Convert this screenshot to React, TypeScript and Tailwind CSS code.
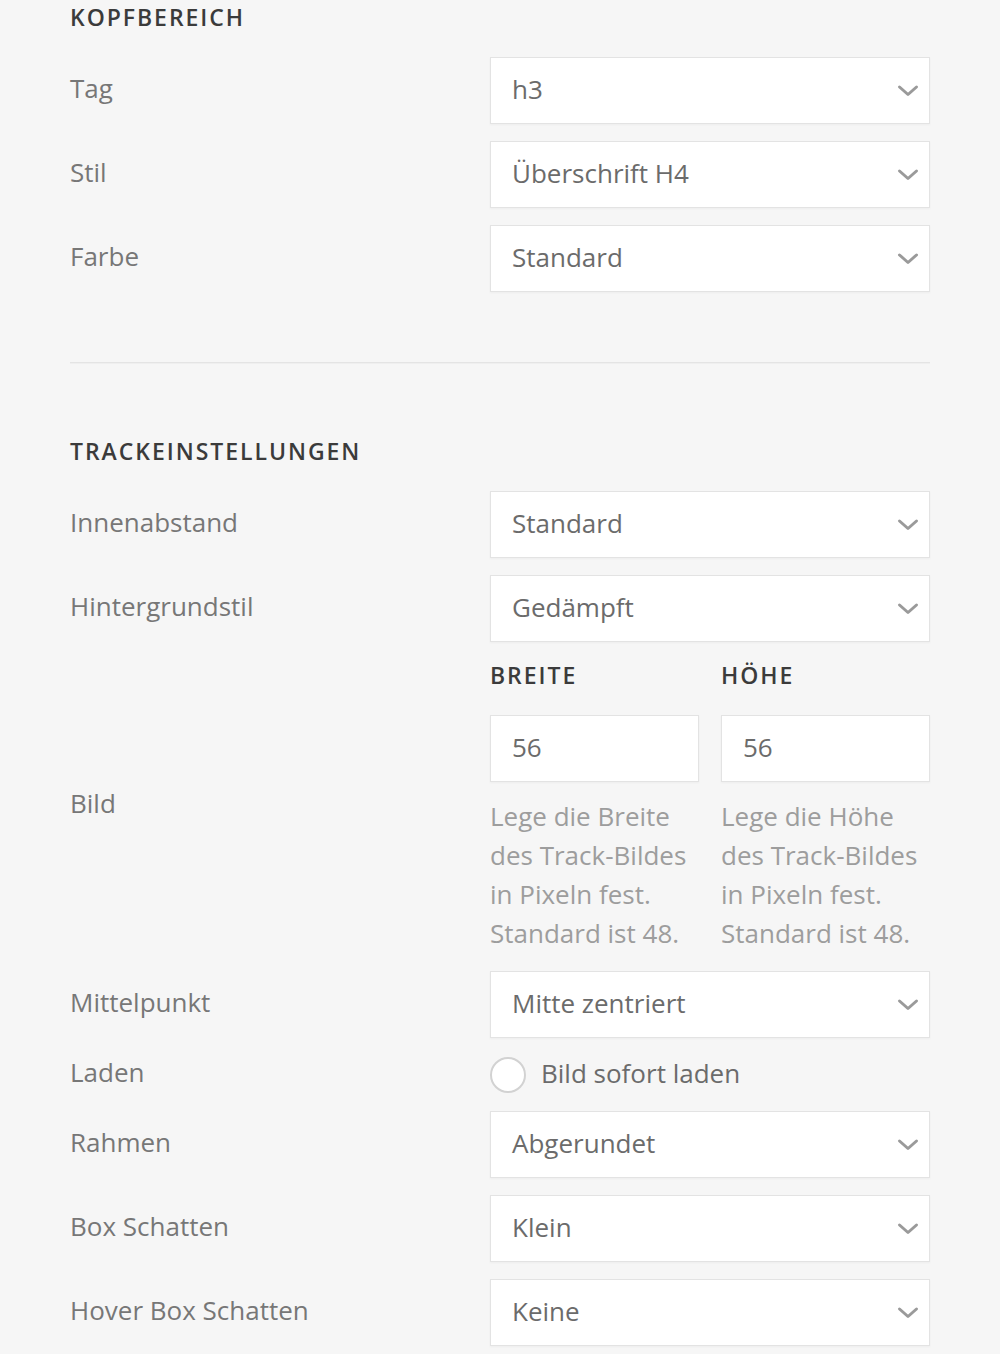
import React from "react";

const SELECTS_TOP = [
  { label: "Tag", value: "h3" },
  { label: "Stil", value: "Überschrift H4" },
  { label: "Farbe", value: "Standard" },
];

const font = { fontFamily: '"Open Sans", "Liberation Sans", sans-serif' };

function Chevron() {
  return (
    <svg width="22" height="14" viewBox="0 0 22 14" className="shrink-0">
      <polyline points="2.5,3 11,10.5 19.5,3" fill="none" stroke="#9a9a9a" strokeWidth="3" strokeLinecap="round" strokeLinejoin="round" />
    </svg>
  );
}

function Select({ value }: { value: string }) {
  return (
    <div className="h-[67px] w-[440px] bg-white border border-[#e3e3e3] shadow-[0_1px_2px_rgba(0,0,0,0.04)] flex items-center justify-between pl-[21px] pr-[10px]">
      <span className="text-[26px] text-[#6b6b6b] leading-none -translate-y-[2px]">{value}</span>
      <Chevron />
    </div>
  );
}

function Row({ label, children }: { label: string; children: React.ReactNode }) {
  return (
    <div className="flex items-center">
      <div className="w-[420px] text-[26px] text-[#777] leading-none -translate-y-[3px]">{label}</div>
      {children}
    </div>
  );
}

function Heading({ children }: { children: React.ReactNode }) {
  return (
    <h2
      className="text-[23px] leading-[36px] font-semibold text-[#3b3b3b] tracking-[0.085em] uppercase -translate-y-[1px]"
      style={font}
    >
      {children}
    </h2>
  );
}

function NumberField({ title, value, help }: { title: string; value: string; help: string }) {
  return (
    <div className="w-[209px] flex flex-col">
      <div className="text-[23px] leading-[34px] font-semibold text-[#3b3b3b] tracking-[0.085em] -translate-y-[1px]">{title}</div>
      <div className="mt-[22px] h-[67px] bg-white border border-[#e3e3e3] shadow-[0_1px_2px_rgba(0,0,0,0.04)] flex items-center pl-[21px]">
        <span className="text-[26px] text-[#6b6b6b] leading-none -translate-y-[2px]">{value}</span>
      </div>
      <p className="mt-[15px] text-[26px] leading-[39px] text-[#9d9d9d]">{help}</p>
    </div>
  );
}

export default function App() {
  return (
    <div className="min-h-[1354px] w-full bg-[#f6f6f6] overflow-hidden" style={font}>
      <div className="w-[860px] ml-[70px]">
        <Heading>Kopfbereich</Heading>
        <div className="mt-[21px] flex flex-col gap-[17px]">
          {SELECTS_TOP.map((s) => (
            <Row key={s.label} label={s.label}>
              <Select value={s.value} />
            </Row>
          ))}
        </div>

        <div className="mt-[70px] h-[2px] bg-[#e4e4e4] border-b border-[#efefef]" />

        <div className="mt-[70px]">
          <Heading>Trackeinstellungen</Heading>
        </div>
        <div className="mt-[21px] flex flex-col gap-[17px]">
          <Row label="Innenabstand">
            <Select value="Standard" />
          </Row>
          <Row label="Hintergrundstil">
            <Select value="Gedämpft" />
          </Row>
          <Row label="Bild">
            <div className="w-[440px] flex justify-between">
              <NumberField
                title="BREITE"
                value="56"
                help="Lege die Breite des Track-Bildes in Pixeln fest. Standard ist 48."
              />
              <NumberField
                title="HÖHE"
                value="56"
                help="Lege die Höhe des Track-Bildes in Pixeln fest. Standard ist 48."
              />
            </div>
          </Row>
          <div className="mt-[1px]">
            <Row label="Mittelpunkt">
              <Select value="Mitte zentriert" />
            </Row>
          </div>
          <Row label="Laden">
            <div className="h-[39px] flex items-center gap-[15px]">
              <span className="w-[36px] h-[36px] rounded-full bg-white border-2 border-[#d2d2d2]" />
              <span className="text-[26px] text-[#6b6b6b] leading-none -translate-y-[2px]">Bild sofort laden</span>
            </div>
          </Row>
          <Row label="Rahmen">
            <Select value="Abgerundet" />
          </Row>
          <Row label="Box Schatten">
            <Select value="Klein" />
          </Row>
          <Row label="Hover Box Schatten">
            <Select value="Keine" />
          </Row>
        </div>
      </div>
    </div>
  );
}
